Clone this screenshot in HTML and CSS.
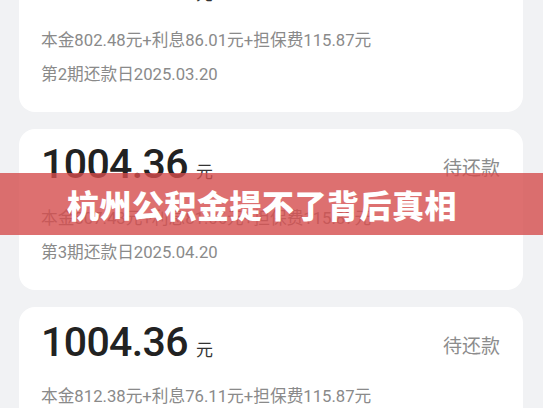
FILE: index.html
```html
<!DOCTYPE html>
<html lang="zh-CN">
<head>
  <meta charset="UTF-8">
  <meta name="viewport" content="width=device-width, initial-scale=1.0">
  <title>还款计划</title>
  <link rel="stylesheet" href="styles.css">
</head>
<body>

<div class="plan-list">
  <div class="plan-card">
    <div class="plan-head">
      <div class="amount">1004.36<span class="unit">元</span></div>
      <div class="status">待还款</div>
    </div>
    <div class="detail">本金802.48元+利息86.01元+担保费115.87元</div>
    <div class="detail">第2期还款日2025.03.20</div>
  </div>

  <div class="plan-card">
    <div class="plan-head">
      <div class="amount">1004.36<span class="unit">元</span></div>
      <div class="status">待还款</div>
    </div>
    <div class="detail">本金807.43元+利息81.06元+担保费115.87元</div>
    <div class="detail">第3期还款日2025.04.20</div>
  </div>

  <div class="plan-card">
    <div class="plan-head">
      <div class="amount">1004.36<span class="unit">元</span></div>
      <div class="status">待还款</div>
    </div>
    <div class="detail">本金812.38元+利息76.11元+担保费115.87元</div>
    <div class="detail">第4期还款日2025.05.20</div>
  </div>
</div>

<div class="title-banner">杭州公积金提不了背后真相</div>

</body>
</html>
```

FILE: styles.css
```css
body {
  margin: 0;
  height: 408px;
  overflow: hidden;
  background: #f1f2f4;
  font-family: Roboto, "Noto Sans CJK SC", sans-serif;
}

.plan-list {
  display: flex;
  flex-direction: column;
  gap: 17px;
  margin-top: -49px; /* list is scrolled a little */
  padding: 0 20px 0 19px;
}

.plan-card {
  background: #fff;
  border-radius: 16px;
  padding: 19px 23px 20px 22px;
}

.plan-head {
  display: flex;
  justify-content: space-between;
  align-items: center;
  height: 41px;
  margin-bottom: 13px;
}

.amount {
  font-size: 41px;
  line-height: 41px;
  font-weight: 500;
  letter-spacing: -0.6px;
  color: #222;
}

.unit {
  font-size: 17px;
  font-weight: 400;
  letter-spacing: 0;
  margin-left: 8px;
  color: #333;
}

.status {
  font-size: 19px;
  line-height: 24px;
  color: #8c8c8c;
}

.detail {
  height: 34px;
  font-size: 16.7px;
  line-height: 34px;
  color: #8a8a8a;
}

/* red title strip laid over the list */
.title-banner {
  position: absolute;
  left: 0;
  right: 0;
  top: 173px;
  height: 62px;
  display: flex;
  align-items: center;
  justify-content: center;
  padding-right: 19px;
  background: rgba(212, 76, 76, 0.8);
  color: #fff;
  font-family: "Noto Sans CJK SC", sans-serif;
  font-size: 32px;
  font-weight: 900;
  letter-spacing: 0.5px;
}
```
